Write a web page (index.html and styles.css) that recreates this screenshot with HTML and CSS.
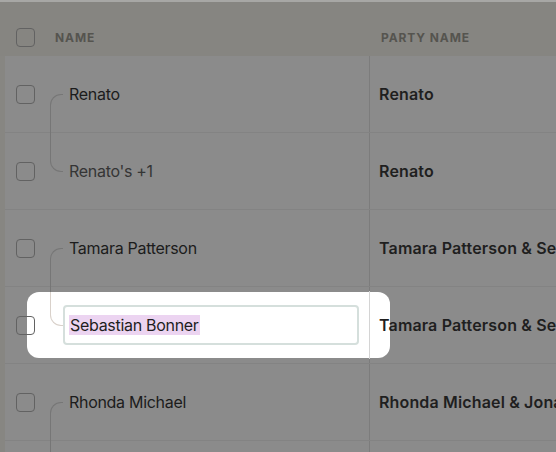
FILE: index.html
```html
<!DOCTYPE html>
<html>
<head>
<meta charset="utf-8">
<link rel="stylesheet" href="styles.css">
</head>
<body>
<div class="table">
  <div class="head">
    <div class="head-name"><span class="box"></span><span class="label">NAME</span></div>
    <div class="head-party"><span class="label">PARTY NAME</span></div>
  </div>
  <div class="row">
    <div class="cell-name link-parent"><span class="box"></span><span class="name">Renato</span></div>
    <div class="cell-party">Renato</div>
  </div>
  <div class="row">
    <div class="cell-name link-child"><span class="box"></span><span class="name muted">Renato's +1</span></div>
    <div class="cell-party">Renato</div>
  </div>
  <div class="row">
    <div class="cell-name link-parent"><span class="box"></span><span class="name">Tamara Patterson</span></div>
    <div class="cell-party">Tamara Patterson &amp; Sebastian Bonner</div>
  </div>
  <div class="row focus">
    <div class="spot"></div>
    <div class="cell-name link-child light"><span class="box"></span><div class="input"><span class="sel">Sebastian Bonner</span></div></div>
    <div class="cell-party">Tamara Patterson &amp; Sebastian Bonner</div>
  </div>
  <div class="row">
    <div class="cell-name link-parent"><span class="box"></span><span class="name">Rhonda Michael</span></div>
    <div class="cell-party">Rhonda Michael &amp; Jonathan Michael</div>
  </div>
  <div class="row">
    <div class="cell-name link-child"><span class="box"></span><span class="name muted">Jonathan Michael</span></div>
    <div class="cell-party">Rhonda Michael &amp; Jonathan Michael</div>
  </div>
</div>
</body>
</html>
```

FILE: styles.css
```css
html, body {
  margin: 0;
  padding: 0;
}
body {
  background: #878682;
  overflow: hidden;
  width: 556px;
  height: 452px;
  font-family: Inter, "Helvetica Neue", Arial, sans-serif;
  border-top: 2px solid #a7a7a5;
  box-sizing: border-box;
}
.table {
  width: 760px;
}
.head {
  display: grid;
  grid-template-columns: 370px 1fr;
  height: 54px;
  box-sizing: border-box;
  padding-top: 16px;
  background: #868581;
}
.head-name, .head-party {
  display: flex;
  align-items: center;
  height: 38px;
}
.head-name {
  padding-left: 16px;
}
.head-name .label {
  margin-left: 20px;
}
.head-party {
  padding-left: 11px;
}
.label {
  font-size: 12px;
  font-weight: 700;
  letter-spacing: 0.9px;
  color: #55544f;
}
.box {
  width: 19px;
  height: 19px;
  box-sizing: border-box;
  border: 1.5px solid #626262;
  border-radius: 4px;
  flex: none;
  position: relative;
  z-index: 2;
}
.row {
  position: relative;
  display: grid;
  grid-template-columns: 365px 1fr;
  height: 77px;
  margin-left: 5px;
  background: #8b8b8b;
  border-bottom: 1px solid #838383;
  box-sizing: border-box;
}
.cell-name {
  position: relative;
  display: flex;
  align-items: center;
  padding-left: 11px;
  border-right: 1px solid #7c7c7c;
  z-index: 1;
}
.cell-name .name {
  margin-left: 34px;
  font-size: 16px;
  letter-spacing: -0.3px;
  color: #1c1c1c;
}
.cell-name .name.muted {
  color: #353535;
}
.cell-party {
  display: flex;
  align-items: center;
  padding-left: 9px;
  font-size: 16px;
  font-weight: 600;
  letter-spacing: 0.15px;
  color: #1f1f1f;
  white-space: nowrap;
  position: relative;
  z-index: 1;
}
.link-parent::before {
  content: "";
  position: absolute;
  left: 45px;
  top: 38px;
  width: 13px;
  bottom: -1px;
  border-left: 1.5px solid #767676;
  border-top: 1.5px solid #767676;
  border-top-left-radius: 11px;
  box-sizing: border-box;
}
.link-child::before {
  content: "";
  position: absolute;
  left: 45px;
  top: 0;
  width: 13px;
  height: 39px;
  border-left: 1.5px solid #767676;
  border-bottom: 1.5px solid #767676;
  border-bottom-left-radius: 11px;
  box-sizing: border-box;
}
.link-child.light::before {
  border-color: #d9d1ca;
}
.link-child.light::after {
  content: "";
  position: absolute;
  left: 45px;
  top: 0;
  width: 2px;
  height: 5px;
  border-left: 1.5px solid #767676;
  box-sizing: border-box;
}
.focus .cell-name {
  border-right: 1px solid #7c7c7c;
  border-image: linear-gradient(to bottom, #7c7c7c 5px, #d4d4d4 5px, #d4d4d4 71px, #7c7c7c 71px) 1;
}
.spot {
  position: absolute;
  left: 22px;
  top: 5px;
  width: 363px;
  height: 66px;
  background: #ffffff;
  border-radius: 12px;
  z-index: 0;
}
.input {
  position: relative;
  z-index: 1;
  margin-left: 28px;
  width: 296px;
  height: 40px;
  box-sizing: border-box;
  border: 2px solid #d5dfdc;
  border-radius: 4px;
  display: flex;
  align-items: center;
  padding-left: 4px;
  background: #fff;
}
.sel {
  background: #ecd4f1;
  font-size: 16px;
  line-height: 20px;
  letter-spacing: -0.3px;
  color: #1e1e1e;
  padding: 0 1px;
}
```
